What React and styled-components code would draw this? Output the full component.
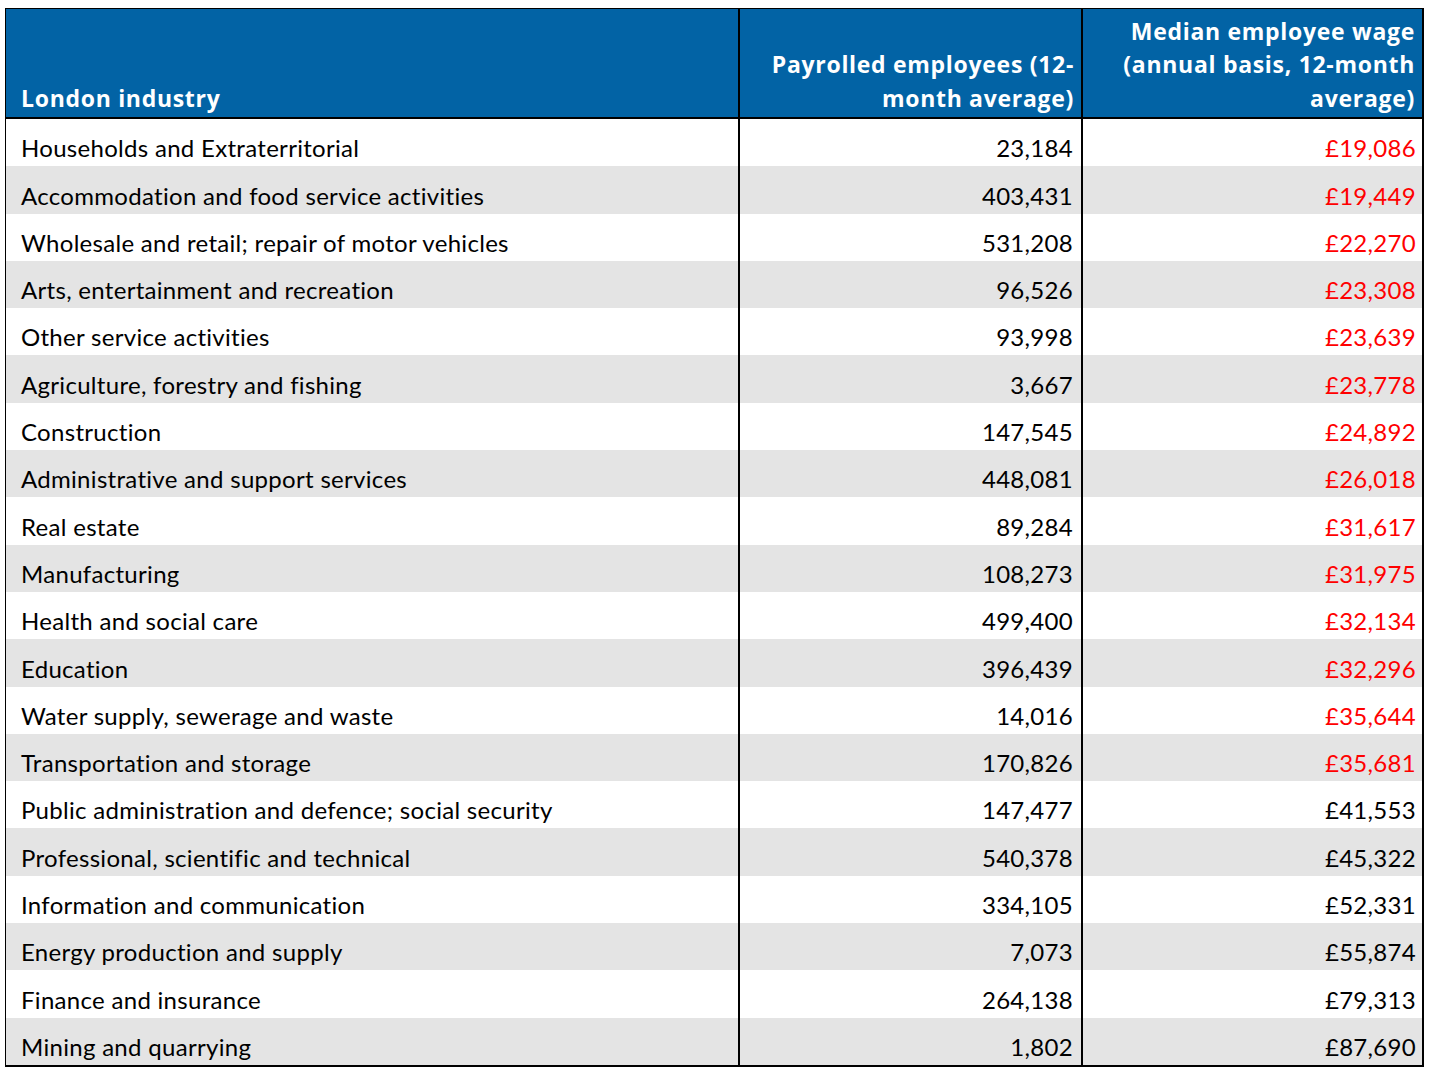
import React from 'react';
import styled, { createGlobalStyle } from 'styled-components';

const Global = createGlobalStyle`
  html, body { margin: 0; padding: 0; background: #ffffff; }
  body { font-family: Lato, "Open Sans", sans-serif; color: #000; }
`;

const Page = styled.div`
  padding: 8px 0 0 5px;
`;

const Table = styled.div`
  display: grid;
  grid-template-columns: 732px 343px 341px;
  width: max-content;
  border-top: 1px solid #000;
  border-left: 1px solid #000;
  border-right: 2px solid #000;
  border-bottom: 2px solid #000;
`;

const HeadCell = styled.div`
  height: 110px;
  box-sizing: border-box;
  background: #0263a5;
  color: #fff;
  font-family: "Open Sans", Lato, sans-serif;
  font-weight: 700;
  font-size: 23px;
  letter-spacing: 0.7px;
  line-height: 33.5px;
  display: flex;
  flex-direction: column;
  justify-content: flex-end;
  align-items: ${p => (p.$num ? 'flex-end' : 'flex-start')};
  text-align: ${p => (p.$num ? 'right' : 'left')};
  padding: ${p => (p.$num ? `0 ${p.$pr}px 2px 0` : '0 0 2px 15px')};
  border-bottom: 2px solid #000;
  border-left: ${p => (p.$divider ? '2px solid #000' : 'none')};
  white-space: nowrap;
`;

const Cell = styled.div`
  height: 47.3px;
  box-sizing: border-box;
  background: ${p => (p.$alt ? '#e4e4e4' : '#ffffff')};
  color: ${p => (p.$red ? '#ff0000' : '#000')};
  font-size: 24px;
  letter-spacing: 0.3px;
  line-height: 28px;
  display: flex;
  align-items: flex-end;
  justify-content: ${p => (p.$num ? 'flex-end' : 'flex-start')};
  padding: ${p => (p.$num ? `0 ${p.$pr}px 4px 0` : '0 0 4px 15px')};
  border-left: ${p => (p.$divider ? '2px solid #000' : 'none')};
  white-space: nowrap;
`;

const rows = [
  ['Households and Extraterritorial', '23,184', '£19,086', true],
  ['Accommodation and food service activities', '403,431', '£19,449', true],
  ['Wholesale and retail; repair of motor vehicles', '531,208', '£22,270', true],
  ['Arts, entertainment and recreation', '96,526', '£23,308', true],
  ['Other service activities', '93,998', '£23,639', true],
  ['Agriculture, forestry and fishing', '3,667', '£23,778', true],
  ['Construction', '147,545', '£24,892', true],
  ['Administrative and support services', '448,081', '£26,018', true],
  ['Real estate', '89,284', '£31,617', true],
  ['Manufacturing', '108,273', '£31,975', true],
  ['Health and social care', '499,400', '£32,134', true],
  ['Education', '396,439', '£32,296', true],
  ['Water supply, sewerage and waste', '14,016', '£35,644', true],
  ['Transportation and storage', '170,826', '£35,681', true],
  ['Public administration and defence; social security', '147,477', '£41,553', false],
  ['Professional, scientific and technical', '540,378', '£45,322', false],
  ['Information and communication', '334,105', '£52,331', false],
  ['Energy production and supply', '7,073', '£55,874', false],
  ['Finance and insurance', '264,138', '£79,313', false],
  ['Mining and quarrying', '1,802', '£87,690', false],
];

export default function App() {
  return (
    <Page>
      <Global />
      <Table>
        <HeadCell>London industry</HeadCell>
        <HeadCell $num $divider $pr={7}>
          <span>Payrolled employees (12-</span>
          <span>month average)</span>
        </HeadCell>
        <HeadCell $num $divider $pr={7}>
          <span>Median employee wage</span>
          <span>(annual basis, 12-month</span>
          <span>average)</span>
        </HeadCell>
        {rows.map(([name, emp, wage, red], i) => (
          <React.Fragment key={name}>
            <Cell $alt={i % 2 === 1}>{name}</Cell>
            <Cell $alt={i % 2 === 1} $num $divider $pr={8}>{emp}</Cell>
            <Cell $alt={i % 2 === 1} $num $divider $pr={6} $red={red}>{wage}</Cell>
          </React.Fragment>
        ))}
      </Table>
    </Page>
  );
}
